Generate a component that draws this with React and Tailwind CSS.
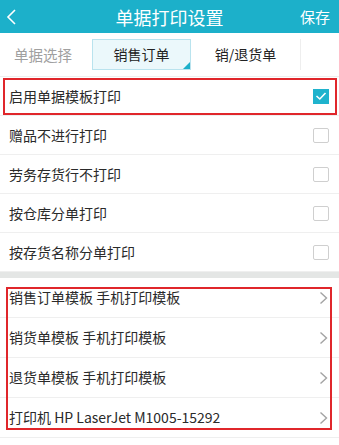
import React from 'react';

const font = { fontFamily: '"Noto Sans CJK SC", "Noto Sans", sans-serif' };

const options = [
  { label: '启用单据模板打印', checked: true },
  { label: '赠品不进行打印', checked: false },
  { label: '劳务存货行不打印', checked: false },
  { label: '按仓库分单打印', checked: false },
  { label: '按存货名称分单打印', checked: false },
];

const links = [
  '销售订单模板 手机打印模板',
  '销货单模板 手机打印模板',
  '退货单模板 手机打印模板',
  '打印机 HP LaserJet M1005-15292',
];

const CheckBox = ({ checked }) =>
  checked ? (
    <div className="w-[16px] h-[15px] bg-[#1fb3cd] flex items-center justify-center">
      <svg width="12" height="10" viewBox="0 0 12 10">
        <path d="M1.5 5 L4.8 8 L10.5 2" fill="none" stroke="white" strokeWidth="1.6" />
      </svg>
    </div>
  ) : (
    <div className="w-[16px] h-[15px] border border-[#cfcfcf] rounded-[2px] bg-white" />
  );

const Chevron = () => (
  <svg width="9" height="14" viewBox="0 0 9 14">
    <path d="M1.5 1.5 L7.5 7 L1.5 12.5" fill="none" stroke="#a3a3a3" strokeWidth="1.4" />
  </svg>
);

export default function App() {
  return (
    <div className="w-[339px] h-[445px] bg-white overflow-hidden" style={font}>
      <div className="h-[33px] bg-[#1cb0ca] grid grid-cols-[60px_1fr_60px] items-center text-white">
        <div className="pl-[6px]">
          <svg width="11" height="16" viewBox="0 0 11 16">
            <path d="M9 1 L2 8 L9 15" fill="none" stroke="white" strokeWidth="1.6" />
          </svg>
        </div>
        <div className="text-center text-[18px] leading-none">单据打印设置</div>
        <div className="text-right pr-[9px] text-[15px] leading-none">保存</div>
      </div>

      <div className="h-[44px] flex items-center border-b border-[#eeeeee]">
        <div className="w-[92px] pl-[14px] text-[14.5px] text-[#a0a0a0]">单据选择</div>
        <div className="relative w-[99px] h-[31px] border border-[#b9e3ee] bg-[#ebf8fb] flex items-center justify-center text-[14px] text-[#222]">
          销售订单
          <div className="absolute right-0 bottom-0 w-0 h-0 border-l-[7px] border-l-transparent border-b-[7px] border-b-[#1cb0ca]" />
        </div>
        <div className="w-[110px] h-[31px] flex items-center justify-center text-[14px] text-[#222] border-r border-[#eeeeee]">
          销/退货单
        </div>
      </div>

      <div className="relative">
        {options.map((o) => (
          <div key={o.label} className="h-[39px] border-b border-[#efefef] flex items-center justify-between pl-[9px] pr-[10px] text-[14px] text-[#2a2a2a]">
            <span>{o.label}</span>
            <CheckBox checked={o.checked} />
          </div>
        ))}
        <div className="absolute left-[3px] top-[1px] w-[334px] h-[37px] border-2 border-[#e0262b] pointer-events-none" />
      </div>

      <div className="h-[6px] bg-[#e4e6e5]" />

      <div className="relative">
        {links.map((l) => (
          <div key={l} className="h-[40px] border-b border-[#efefef] flex items-center justify-between pl-[9px] pr-[11px] text-[14px] text-[#2a2a2a]">
            <span>{l}</span>
            <Chevron />
          </div>
        ))}
        <div className="absolute left-[6px] top-[9px] w-[326px] h-[143px] border-2 border-[#e0262b] pointer-events-none" />
      </div>
    </div>
  );
}
